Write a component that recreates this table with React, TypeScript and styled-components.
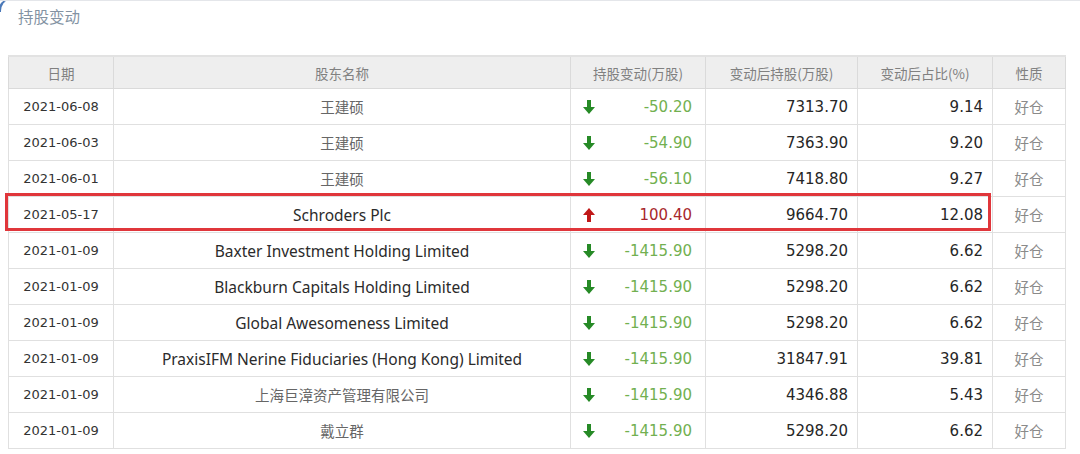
import React from "react";
import styled, { createGlobalStyle } from "styled-components";

const GlobalStyle = createGlobalStyle`
  html, body {
    margin: 0;
    padding: 0;
    background: #ffffff;
  }
  body {
    font-family: "DejaVu Sans", "Noto Sans CJK SC", sans-serif;
  }
`;

const Panel = styled.section`
  position: relative;
  width: 1080px;
  height: 454px;
  box-sizing: border-box;
  border-top: 1px solid #e4e6ea;
  padding: 3px 0 0 8px;
  overflow: hidden;

  &::before {
    content: "";
    position: absolute;
    left: -2px;
    top: -2px;
    width: 12px;
    height: 12px;
    border-top-left-radius: 12px;
    border-left: 3px solid #4a78b8;
    border-top: 1px solid #c9d6ea;
  }
`;

const Title = styled.h3`
  margin: 0 0 0 10px;
  height: 24px;
  line-height: 24px;
  font-family: "Noto Sans CJK SC", sans-serif;
  font-weight: 400;
  font-size: 15.5px;
  color: #8393a3;
`;

const TableWrap = styled.div`
  position: relative;
  margin-top: 27px;
  width: 1057px;
`;

const Table = styled.table`
  border-collapse: collapse;
  table-layout: fixed;
  width: 1057px;
  border: 1px solid #d6d6d6;
`;

const Head = styled.th`
  height: 31px;
  padding: 0;
  background: #eeeeee;
  border: 1px solid #dadada;
  border-top: 2px solid #e2e2e2;
  font-family: "Noto Sans CJK SC", sans-serif;
  font-weight: 400;
  font-size: 13.5px;
  color: #808080;
  text-align: center;
`;

const Cell = styled.td<{ $align?: "left" | "center" | "right" }>`
  height: 35px;
  padding: 0 9px;
  border: 1px solid #e0e0e0;
  text-align: ${(p) => p.$align ?? "center"};
  font-size: 15px;
  color: #262626;
  white-space: nowrap;
`;

const DateCell = styled(Cell)`
  font-size: 13px;
  color: #333333;
`;

const NameCell = styled(Cell)<{ $cjk: boolean }>`
  font-family: ${(p) =>
    p.$cjk ? '"Noto Sans CJK SC", sans-serif' : '"Noto Sans", "DejaVu Sans", sans-serif'};
  font-size: ${(p) => (p.$cjk ? "14.5px" : "15.5px")};
  color: ${(p) => (p.$cjk ? "#666666" : "#2b2b2b")};
`;

const ChangeInner = styled.div`
  display: flex;
  align-items: center;
  justify-content: space-between;
  padding: 0 4px 0 3px;
`;

const ChangeValue = styled.span<{ $up: boolean }>`
  color: ${(p) => (p.$up ? "#a8282c" : "#72b050")};
  font-size: 15px;
`;

const NatureCell = styled(Cell)`
  font-family: "Noto Sans CJK SC", sans-serif;
  font-size: 14.5px;
  color: #8a8a8a;
`;

const Highlight = styled.div`
  position: absolute;
  left: -3px;
  top: 138px;
  width: 986px;
  height: 38px;
  box-sizing: border-box;
  border: 3px solid #e0363b;
  pointer-events: none;
`;

const Arrow = ({ up }: { up: boolean }) => (
  <svg width="12" height="14" viewBox="0 0 12 14">
    {up ? (
      <g fill="#c01818">
        <polygon points="6,0 12,7 0,7" />
        <rect x="4" y="6.5" width="4" height="7.5" />
      </g>
    ) : (
      <g fill="#268a26">
        <rect x="4" y="0" width="4" height="7.5" />
        <polygon points="0,7 12,7 6,14" />
      </g>
    )}
  </svg>
);

type Row = {
  date: string;
  name: string;
  change: string;
  after: string;
  ratio: string;
};

const rows: Row[] = [
  { date: "2021-06-08", name: "王建硕", change: "-50.20", after: "7313.70", ratio: "9.14" },
  { date: "2021-06-03", name: "王建硕", change: "-54.90", after: "7363.90", ratio: "9.20" },
  { date: "2021-06-01", name: "王建硕", change: "-56.10", after: "7418.80", ratio: "9.27" },
  { date: "2021-05-17", name: "Schroders Plc", change: "100.40", after: "9664.70", ratio: "12.08" },
  { date: "2021-01-09", name: "Baxter Investment Holding Limited", change: "-1415.90", after: "5298.20", ratio: "6.62" },
  { date: "2021-01-09", name: "Blackburn Capitals Holding Limited", change: "-1415.90", after: "5298.20", ratio: "6.62" },
  { date: "2021-01-09", name: "Global Awesomeness Limited", change: "-1415.90", after: "5298.20", ratio: "6.62" },
  { date: "2021-01-09", name: "PraxisIFM Nerine Fiduciaries (Hong Kong) Limited", change: "-1415.90", after: "31847.91", ratio: "39.81" },
  { date: "2021-01-09", name: "上海巨漳资产管理有限公司", change: "-1415.90", after: "4346.88", ratio: "5.43" },
  { date: "2021-01-09", name: "戴立群", change: "-1415.90", after: "5298.20", ratio: "6.62" },
];

const isCjk = (s: string) => /[\u4e00-\u9fff]/.test(s);

export default function App() {
  return (
    <>
      <GlobalStyle />
      <Panel>
        <Title>持股变动</Title>
        <TableWrap>
          <Table>
            <colgroup>
              <col style={{ width: 105 }} />
              <col style={{ width: 457 }} />
              <col style={{ width: 135 }} />
              <col style={{ width: 152 }} />
              <col style={{ width: 135 }} />
              <col style={{ width: 73 }} />
            </colgroup>
            <thead>
              <tr>
                <Head>日期</Head>
                <Head>股东名称</Head>
                <Head>持股变动(万股)</Head>
                <Head>变动后持股(万股)</Head>
                <Head>变动后占比(%)</Head>
                <Head>性质</Head>
              </tr>
            </thead>
            <tbody>
              {rows.map((r, i) => {
                const up = !r.change.startsWith("-");
                return (
                  <tr key={i}>
                    <DateCell>{r.date}</DateCell>
                    <NameCell $cjk={isCjk(r.name)}>{r.name}</NameCell>
                    <Cell $align="right">
                      <ChangeInner>
                        <Arrow up={up} />
                        <ChangeValue $up={up}>{r.change}</ChangeValue>
                      </ChangeInner>
                    </Cell>
                    <Cell $align="right">{r.after}</Cell>
                    <Cell $align="right">{r.ratio}</Cell>
                    <NatureCell>好仓</NatureCell>
                  </tr>
                );
              })}
            </tbody>
          </Table>
          <Highlight />
        </TableWrap>
      </Panel>
    </>
  );
}
